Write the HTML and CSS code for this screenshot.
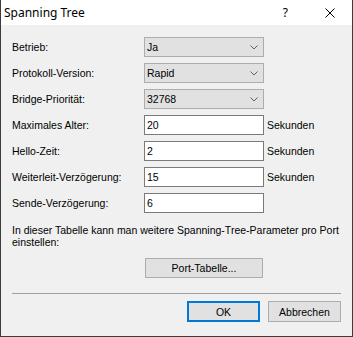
FILE: index.html
```html
<!DOCTYPE html>
<html lang="de">
<head>
    <meta charset="UTF-8">
    <title>Spanning Tree</title>
    <link rel="stylesheet" href="styles.css">
</head>
<body>
    <div class="window">
        <div class="titlebar">
            <span class="title">Spanning Tree</span>
            <span class="help">?</span>
            <svg class="close" width="10" height="10" viewBox="0 0 10 10">
                <path d="M0.5 0.5 L9.5 9.5 M9.5 0.5 L0.5 9.5" stroke="#000" stroke-width="1" fill="none"/>
            </svg>
        </div>

        <div class="content">
            <div class="form">
                <label>Betrieb:</label>
                <div class="combo"><span>Ja</span><svg width="8" height="5" viewBox="0 0 8 5"><path d="M0.5 0.5 L4 4 L7.5 0.5" stroke="#606060" fill="none"/></svg></div>
                <span></span>

                <label>Protokoll-Version:</label>
                <div class="combo"><span>Rapid</span><svg width="8" height="5" viewBox="0 0 8 5"><path d="M0.5 0.5 L4 4 L7.5 0.5" stroke="#606060" fill="none"/></svg></div>
                <span></span>

                <label>Bridge-Priorität:</label>
                <div class="combo"><span>32768</span><svg width="8" height="5" viewBox="0 0 8 5"><path d="M0.5 0.5 L4 4 L7.5 0.5" stroke="#606060" fill="none"/></svg></div>
                <span></span>

                <label>Maximales Alter:</label>
                <div class="textbox">20</div>
                <span class="unit">Sekunden</span>

                <label>Hello-Zeit:</label>
                <div class="textbox">2</div>
                <span class="unit">Sekunden</span>

                <label>Weiterleit-Verzögerung:</label>
                <div class="textbox">15</div>
                <span class="unit">Sekunden</span>

                <label>Sende-Verzögerung:</label>
                <div class="textbox">6</div>
                <span></span>
            </div>

            <p class="hint">In dieser Tabelle kann man weitere Spanning-Tree-Parameter pro Port einstellen:</p>

            <div class="button port">Port-Tabelle...</div>

            <hr class="separator">

            <div class="actions">
                <div class="button default">OK</div>
                <div class="button">Abbrechen</div>
            </div>
        </div>
    </div>
</body>
</html>
```

FILE: styles.css
```css
html, body {
    margin: 0;
    padding: 0;
}
body {
    font-family: "Liberation Sans", Arial, sans-serif;
    font-size: 10.5px;
    color: #000;
}
.window {
    width: 353px;
    height: 337px;
    box-sizing: border-box;
    background: #f0f0f0;
    border: 1px solid #3c3c3c;
    border-top: none;
}
.titlebar {
    height: 25px;
    background: #fff;
    display: flex;
    align-items: center;
    padding-left: 3px;
}
.title {
    font-family: "Noto Sans", sans-serif;
    font-size: 12px;
    flex: 1;
}
.help {
    font-family: "Noto Sans", sans-serif;
    font-size: 12px;
    margin-right: 37px;
}
.close {
    margin-right: 17px;
}
.content {
    padding: 12px 11px 0 11px;
}
.form {
    display: grid;
    grid-template-columns: 132px 120px auto;
    grid-auto-rows: 20px;
    row-gap: 6px;
    align-items: center;
}
.combo {
    height: 20px;
    box-sizing: border-box;
    background: #e1e1e1;
    border: 1px solid #adadad;
    display: flex;
    align-items: center;
    justify-content: space-between;
    padding: 0 5px 0 2px;
}
.textbox {
    height: 20px;
    box-sizing: border-box;
    background: #fff;
    border: 1px solid #7a7a7a;
    display: flex;
    align-items: center;
    padding-left: 2px;
}
.unit {
    padding-left: 3px;
}
.hint {
    margin: 11px 0 0 0;
    line-height: 12px;
}
.button {
    height: 21px;
    box-sizing: border-box;
    background: #e1e1e1;
    border: 1px solid #adadad;
    display: flex;
    align-items: center;
    justify-content: center;
    width: 73px;
}
.port {
    width: 118px;
    height: 20px;
    margin: 10px 0 0 133px;
}
.separator {
    margin: 15px 0 0 0;
    border: none;
    border-top: 1px solid #a0a0a0;
    height: 0;
}
.actions {
    display: flex;
    justify-content: flex-end;
    gap: 8px;
    margin-top: 7px;
}
.default {
    border: 2px solid #0078d7;
}
```
